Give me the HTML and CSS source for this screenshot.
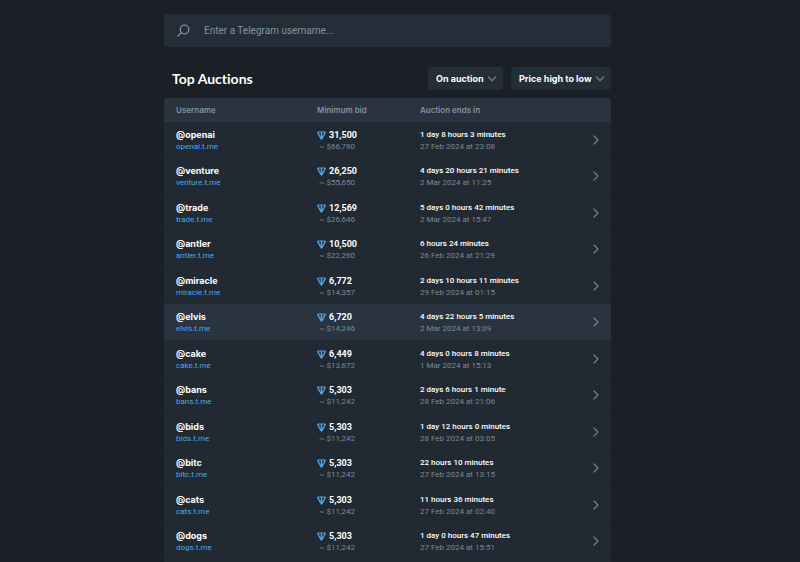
FILE: index.html
```html
<!DOCTYPE html>
<html lang="en">
<head>
    <meta charset="UTF-8">
    <meta name="viewport" content="width=device-width, initial-scale=1.0">
    <title>Top Auctions</title>
    <link rel="stylesheet" href="styles.css">
</head>
<body>
    <svg class="sprite" aria-hidden="true">
        <symbol id="ton" viewBox="0 0 18 18">
            <path d="M2.500 2h13c1 0 1.400 1 1 1.800L9.600 15.800c-.3.500-.9.500-1.200 0L1.500 3.800C1.100 3 1.500 2 2.500 2zM9 2V15" fill="none" stroke="currentColor" stroke-width="2.400" stroke-linejoin="round"/>
            <path d="M5.500 4.500L8.500 13M12.500 4.500L9.500 13" fill="none" stroke="currentColor" stroke-width="1" opacity=".5"/>
        </symbol>
        <symbol id="arrow" viewBox="0 0 6 10">
            <path d="M1 1l4 4-4 4" fill="none" stroke="currentColor" stroke-width="1.2" stroke-linecap="round" stroke-linejoin="round"/>
        </symbol>
        <symbol id="chevron" viewBox="0 0 10 6">
            <path d="M1.500 1L5 4.800 8.500 1" fill="none" stroke="currentColor" stroke-width="1.2" stroke-linecap="round" stroke-linejoin="round"/>
        </symbol>
    </svg>

    <main class="container">
        <form class="search" role="search">
            <svg class="search-icon" viewBox="0 0 13 13" aria-hidden="true">
                <circle cx="7.500" cy="5.500" r="4.300" fill="none" stroke="currentColor" stroke-width="1.300"/>
                <path d="M4.400 8.600L1 12" stroke="currentColor" stroke-width="1.300" stroke-linecap="round"/>
            </svg>
            <input type="text" class="search-input" name="query" aria-label="Username" placeholder="Enter a Telegram username...">
        </form>

        <div class="toolbar">
            <h1>Top Auctions</h1>
            <div class="filters">
                <div class="dropdown">
                    <select name="filter" aria-label="Filter">
                        <option>On auction</option>
                    </select>
                    <svg class="dropdown-icon" aria-hidden="true"><use href="#chevron"/></svg>
                </div>
                <div class="dropdown">
                    <select name="sort" aria-label="Sort">
                        <option>Price high to low</option>
                    </select>
                    <svg class="dropdown-icon" aria-hidden="true"><use href="#chevron"/></svg>
                </div>
            </div>
        </div>

        <div class="panel">
            <table class="auctions">
                <colgroup>
                    <col class="col-name">
                    <col class="col-bid">
                    <col>
                    <col class="col-arrow">
                </colgroup>
                <thead>
                    <tr>
                        <th>Username</th>
                        <th>Minimum bid</th>
                        <th>Auction ends in</th>
                        <th></th>
                    </tr>
                </thead>
                <tbody id="rows"></tbody>
            </table>
        </div>
    </main>

    <script src="script.js"></script>
</body>
</html>
```
FILE: styles.css
```css
* {
    box-sizing: border-box;
}
body {
    margin: 0;
    padding-right: 25px;
    min-height: 100vh;
    display: flex;
    justify-content: center;
    background-color: #1a2026;
    color: #fff;
    font-family: Inter, "Liberation Sans", sans-serif;
    font-size: 8px;
}
.sprite {
    display: none;
}
.container {
    width: 100%;
    max-width: 447px;
    padding-top: 14px;
    display: flex;
    flex-direction: column;
}
.search {
    display: flex;
    align-items: center;
    gap: 14px;
    padding: 0 13px;
    border-radius: 4px;
    background-color: #242e38;
}
.search-icon {
    width: 13px;
    height: 13px;
    color: #84919e;
}
.search-input {
    flex: 1;
    height: 33px;
    padding: 0;
    border: none;
    outline: none;
    background: none;
    color: #fff;
    font-family: Roboto, sans-serif;
    font-size: 10px;
}
.search-input::placeholder {
    color: #84919e;
}
.toolbar {
    display: flex;
    justify-content: space-between;
    align-items: center;
    padding: 20px 0 8px 8px;
}
h1 {
    margin: 0;
    font-family: Lato, sans-serif;
    font-size: 14px;
    font-weight: 700;
    font-variant-ligatures: none;
}
.filters {
    display: flex;
    gap: 8px;
}
.dropdown {
    position: relative;
}
.dropdown select {
    appearance: none;
    height: 23px;
    padding: 0 19px 0 8px;
    border: none;
    border-radius: 4px;
    background-color: #242e38;
    color: #fff;
    font-family: inherit;
    font-size: 9px;
    font-weight: 700;
    cursor: pointer;
}
.dropdown-icon {
    position: absolute;
    top: 9px;
    right: 6px;
    width: 10px;
    height: 6px;
    color: #74818e;
    pointer-events: none;
}
.panel {
    flex: 1;
    border-radius: 4px 4px 0 0;
    background-color: #212932;
    overflow: hidden;
}
.auctions {
    width: 100%;
    table-layout: fixed;
    border-collapse: separate;
    border-spacing: 0;
}
.col-name {
    width: 141px;
}
.col-bid {
    width: 103px;
}
.col-arrow {
    width: 31px;
}
th {
    height: 24px;
    padding: 0 0 0 12px;
    background-color: #2a3440;
    color: #84919e;
    font-weight: 600;
    text-align: left;
}
td {
    padding: 7px 0 5px 12px;
    border-bottom: 1px solid #1e262e;
    font-family: Roboto, sans-serif;
    white-space: nowrap;
}
tr:nth-child(even) td {
    padding-bottom: 6px;
}
.auctions tbody td.more {
    padding: 0;
}
.active td {
    background-color: #2a3440;
}
.value {
    display: flex;
    align-items: center;
    gap: 3px;
    font-size: 9px;
    font-weight: 700;
    line-height: 12px;
}
.name {
    font-family: Inter, sans-serif;
}
.time {
    font-weight: 500;
    line-height: 12px;
}
.sub {
    display: block;
    line-height: 11px;
    color: #7d8995;
}
.price {
    padding-left: 2px;
}
a.sub {
    color: #4ba9f0;
    text-decoration: none;
}
.ton {
    width: 9px;
    height: 9px;
    color: #4ba9f0;
}
.arrow {
    display: block;
    width: 6px;
    height: 10px;
    margin: 0 auto;
    color: #74818e;
}
```
FILE: script.js
```js
const auctions = [
    ['openai', '31,500', '66,780', '1 day 8 hours 3 minutes', '27 Feb 2024 at 23:08'],
    ['venture', '26,250', '55,650', '4 days 20 hours 21 minutes', '2 Mar 2024 at 11:25'],
    ['trade', '12,569', '26,646', '5 days 0 hours 42 minutes', '2 Mar 2024 at 15:47'],
    ['antler', '10,500', '22,260', '6 hours 24 minutes', '26 Feb 2024 at 21:29'],
    ['miracle', '6,772', '14,357', '2 days 10 hours 11 minutes', '29 Feb 2024 at 01:15'],
    ['elvis', '6,720', '14,246', '4 days 22 hours 5 minutes', '2 Mar 2024 at 13:09'],
    ['cake', '6,449', '13,672', '4 days 0 hours 8 minutes', '1 Mar 2024 at 15:13'],
    ['bans', '5,303', '11,242', '2 days 6 hours 1 minute', '28 Feb 2024 at 21:06'],
    ['bids', '5,303', '11,242', '1 day 12 hours 0 minutes', '28 Feb 2024 at 03:05'],
    ['bitc', '5,303', '11,242', '22 hours 10 minutes', '27 Feb 2024 at 13:15'],
    ['cats', '5,303', '11,242', '11 hours 36 minutes', '27 Feb 2024 at 02:40'],
    ['dogs', '5,303', '11,242', '1 day 0 hours 47 minutes', '27 Feb 2024 at 15:51']
];

const active = 'elvis';

document.getElementById('rows').innerHTML = auctions.map(([name, bid, usd, left, date]) => `
    <tr class="${name === active ? 'active' : ''}">
        <td>
            <div class="value name">@${name}</div>
            <a class="sub" href="#${name}">${name}.t.me</a>
        </td>
        <td>
            <div class="value"><svg class="ton" aria-hidden="true"><use href="#ton"/></svg>${bid}</div>
            <span class="sub price">~ $${usd}</span>
        </td>
        <td>
            <div class="time">${left}</div>
            <span class="sub">${date}</span>
        </td>
        <td class="more"><svg class="arrow" aria-hidden="true"><use href="#arrow"/></svg></td>
    </tr>
`).join('');
```
